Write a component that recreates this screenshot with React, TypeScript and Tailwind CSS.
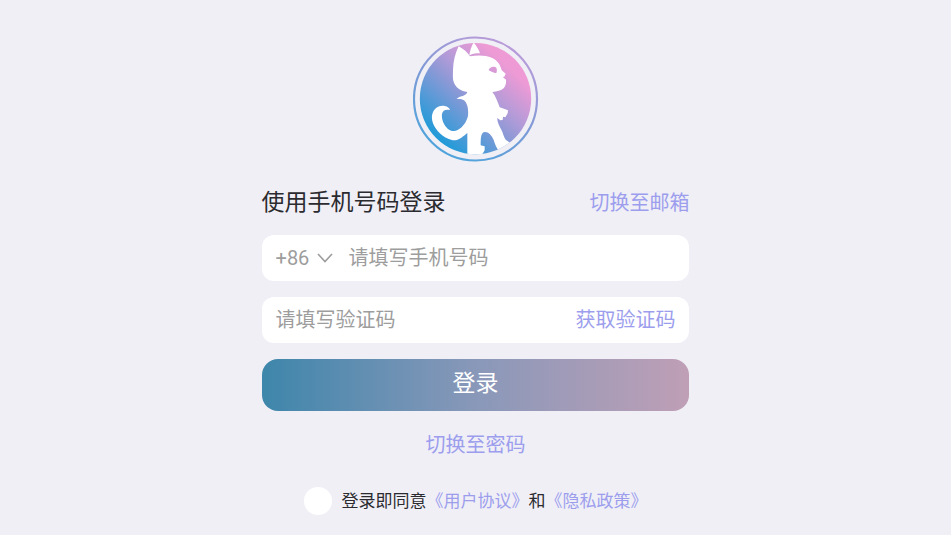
import { useState } from "react";

function Logo() {
  return (
    <svg viewBox="24 18 378 378" className="size-[126px]" role="img" aria-label="Logo">
      <defs>
        <linearGradient id="disc" gradientUnits="userSpaceOnUse" x1="94" y1="324" x2="310" y2="90">
          <stop offset="0" stopColor="#1f9bd8" />
          <stop offset="0.5" stopColor="#9499d6" />
          <stop offset="0.62" stopColor="#ae9bd8" />
          <stop offset="0.95" stopColor="#ee9ad5" />
        </linearGradient>
        <linearGradient id="ring" gradientUnits="userSpaceOnUse" x1="120" y1="370" x2="300" y2="40">
          <stop offset="0" stopColor="#50a4dc" />
          <stop offset="0.5" stopColor="#7f9ad6" />
          <stop offset="1" stopColor="#ba9cd9" />
        </linearGradient>
        <clipPath id="inside">
          <circle cx="211.5" cy="206" r="167" />
        </clipPath>
      </defs>
      <circle cx="211.5" cy="207" r="184.5" fill="none" stroke="url(#ring)" strokeWidth="6.5" />
      <circle cx="211.5" cy="206" r="167" fill="url(#disc)" />
      <g fill="#fff" clipPath="url(#inside)">
        <path d="M193 76C195 62 199 50 206 37C214 48 222 59 225 70C214 70 203 71 193 76Z" />
        <path
          fillRule="evenodd"
          d="M161 49C174 56 187 66 195 79C216 75 242 75 260 83C278 91 286 104 290 121L302 131L299 139L294 142L303 149C304 159 302 168 296 175C288 182 277 184 262 186C273 200 278 216 284 232L309 241L308 250L301 262L294 260L293 270L286 271L277 264C276 276 283 287 289 299C295 311 296 320 302 329L317 340L322 348L316 362L283 364C274 354 270 342 266 330C260 316 251 306 240 306C228 307 227 321 227 346L239 349L239 361L230 376L187 376L187 309C177 317 164 329 151 331C132 331 107 317 93 296C83 282 78 267 82 252C88 233 103 225 119 228C128 230 133 234 135 240C122 237 113 241 111 252C109 268 116 285 128 296C137 304 149 305 158 300C174 291 185 275 189 257C191 237 187 219 177 211C170 206 163 207 155 207C160 200 169 199 175 197C184 193 186 190 187 186C168 183 153 173 147 158C142 147 144 135 144 119C145 92 151 69 161 49ZM251 121C253 112 263 108 271 111C276 114 277 122 274 129C267 130 260 125 251 121Z"
        />
      </g>
    </svg>
  );
}

export default function App() {
  const [agreed, setAgreed] = useState(false);

  return (
    <main className="flex min-h-screen flex-col items-center bg-[#f0eff6] pt-9 font-['Roboto','Noto_Sans_CJK_SC',sans-serif] text-xl text-[#9c9eed]">
      <Logo />
      <form className="mt-[25px] flex w-[45%] min-w-80 flex-col gap-4" onSubmit={(e) => e.preventDefault()}>
        <div className="flex h-8 items-center justify-between">
          <h1 className="text-[23px] leading-8 text-[#2b2b2f]">使用手机号码登录</h1>
          <button type="button" className="leading-8">切换至邮箱</button>
        </div>

        <div className="flex h-[46px] items-center rounded-xl bg-white px-3.5">
          <div className="relative flex w-[73px] shrink-0 items-center">
            <select
              aria-label="国家/地区代码"
              className="w-full appearance-none bg-transparent text-[#9d9d9d] outline-none"
            >
              <option>+86</option>
            </select>
            <svg
              viewBox="0 0 16 10"
              className="pointer-events-none absolute left-[41px] h-2.5 w-4"
              fill="none"
              stroke="#9d9d9d"
              strokeWidth="1.6"
              aria-hidden="true"
            >
              <path d="M1 1l7 7.5L15 1" />
            </svg>
          </div>
          <input
            type="tel"
            aria-label="手机号码"
            placeholder="请填写手机号码"
            className="min-w-0 flex-1 bg-transparent text-[#2b2b2f] outline-none placeholder:text-[#9d9d9d]"
          />
        </div>

        <div className="flex h-[46px] items-center rounded-xl bg-white px-3.5">
          <input
            type="text"
            inputMode="numeric"
            aria-label="验证码"
            placeholder="请填写验证码"
            className="min-w-0 flex-1 bg-transparent text-[#2b2b2f] outline-none placeholder:text-[#9d9d9d]"
          />
          <button type="button" className="shrink-0">获取验证码</button>
        </div>

        <button
          type="submit"
          className="h-[52px] rounded-2xl bg-linear-to-r/srgb from-[#3e86ab] via-[#8998b9] to-[#bf9fb6] pb-0.5 text-[23px] text-white"
        >
          登录
        </button>
        <button type="button" className="self-center leading-9">切换至密码</button>
      </form>

      <div className="mt-6 flex items-center gap-2.5 text-[17px] leading-7 text-[#2b2b2f]">
        <input
          id="agree"
          type="checkbox"
          checked={agreed}
          onChange={(e) => setAgreed(e.target.checked)}
          className="size-7 appearance-none rounded-full bg-white checked:bg-[#9c9eed]"
        />
        <p>
          <label htmlFor="agree">登录即同意</label>
          <a href="#terms" className="text-[#9c9eed]">《用户协议》</a>
          和
          <a href="#privacy" className="text-[#9c9eed]">《隐私政策》</a>
        </p>
      </div>
    </main>
  );
}
